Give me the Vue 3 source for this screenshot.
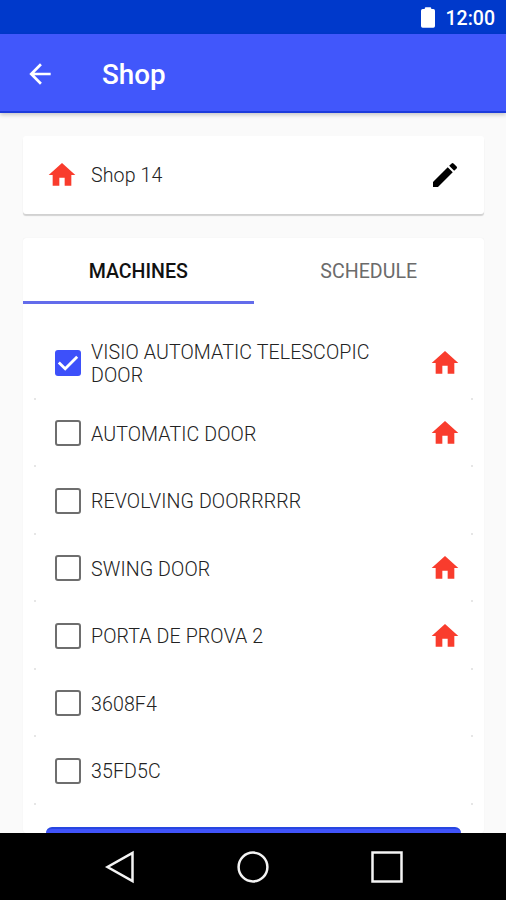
<template>
  <div class="screen">
    <div class="status-bar">
      <svg class="battery" viewBox="0 0 15 22"><path d="M4 2V1.2Q4 0 5.2 0h4.6Q11 0 11 1.2V2h2.2Q15 2 15 3.8v16.4q0 1.8-1.8 1.8H1.8Q0 22 0 20.2V3.8Q0 2 1.8 2z" /></svg>
      <span class="clock">12:00</span>
    </div>

    <header class="app-bar">
      <svg class="back" viewBox="0 0 24 24"><path d="M20 11H7.83l5.59-5.59L12 4l-8 8 8 8 1.41-1.41L7.83 13H20v-2z" /></svg>
      <h1 class="title">{{ title }}</h1>
    </header>

    <main class="content">
      <section class="shop-card">
        <svg class="home" viewBox="0 0 24 24"><path d="M10 20v-6h4v6h5v-8h3L12 3 2 12h3v8z" /></svg>
        <span class="shop-name">Shop 14</span>
        <svg class="edit" viewBox="0 0 24 24"><path d="M3 17.25V21h3.75L17.81 9.94l-3.75-3.75L3 17.25zM20.71 7.04a1 1 0 0 0 0-1.41l-2.34-2.34a1 1 0 0 0-1.41 0l-1.83 1.83 3.75 3.75 1.83-1.83z" /></svg>
      </section>

      <section class="panel">
        <nav class="tabs">
          <button
            v-for="tab in tabs"
            :key="tab"
            class="tab"
            :class="{ active: tab === activeTab }"
            @click="activeTab = tab"
          >{{ tab }}</button>
        </nav>

        <ul class="machines">
          <li v-for="m in machines" :key="m.name" class="machine" @click="m.checked = !m.checked">
            <span class="checkbox" :class="{ checked: m.checked }">
              <svg v-if="m.checked" viewBox="0 0 26 26"><path d="M3.8 12.6l6.4 6.2L22.2 6.8" /></svg>
            </span>
            <span class="name">{{ m.name }}</span>
            <svg v-if="m.home" class="home" viewBox="0 0 24 24"><path d="M10 20v-6h4v6h5v-8h3L12 3 2 12h3v8z" /></svg>
          </li>
        </ul>

        <button class="submit"></button>
      </section>
    </main>

    <footer class="nav-bar">
      <svg viewBox="0 0 34 34"><path d="M30.5 2.8v28.4L5.5 17z" /></svg>
      <svg viewBox="0 0 34 34"><circle cx="17" cy="17" r="14.4" /></svg>
      <svg viewBox="0 0 34 34"><path d="M2.5 2.5h29v29h-29z" /></svg>
    </footer>
  </div>
</template>

<script setup>
import { ref } from 'vue'

const title = 'Shop'
const tabs = ['MACHINES', 'SCHEDULE']
const activeTab = ref('MACHINES')

const machines = ref([
  { name: 'VISIO AUTOMATIC TELESCOPIC DOOR', checked: true, home: true },
  { name: 'AUTOMATIC DOOR', checked: false, home: true },
  { name: 'REVOLVING DOORRRRR', checked: false, home: false },
  { name: 'SWING DOOR', checked: false, home: true },
  { name: 'PORTA DE PROVA 2', checked: false, home: true },
  { name: '3608F4', checked: false, home: false },
  { name: '35FD5C', checked: false, home: false }
])
</script>

<style>
body { margin: 0; overflow: hidden; }
</style>

<style scoped>
.screen {
  width: 506px;
  height: 900px;
  display: flex;
  flex-direction: column;
  overflow: hidden;
  background: #fafafa;
  font-family: Roboto, "Liberation Sans", sans-serif;
}
button { border: 0; padding: 0; background: none; font-family: inherit; }
.status-bar {
  flex: none;
  height: 34px;
  box-sizing: border-box;
  padding: 0 11px 0 0;
  display: flex;
  align-items: center;
  justify-content: flex-end;
  gap: 11px;
  background: #0039cb;
  color: #fff;
}
.battery { width: 14px; height: 21px; fill: #fff; }
.clock { font-size: 19.5px; font-weight: 500; line-height: 32px; padding-top: 3px; }
.app-bar {
  flex: none;
  height: 79px;
  box-sizing: border-box;
  padding: 2px 0 0 24px;
  display: flex;
  align-items: center;
  gap: 46px;
  background: #4157fb;
  border-bottom: 2px solid #1d3bdc;
  box-shadow: 0 2px 4px rgba(0,0,0,0.2);
  color: #fff;
}
.back { width: 32px; height: 32px; fill: #fff; }
.title { margin: 0; font-size: 27.8px; font-weight: 500; line-height: 36px; padding-top: 2px; }
.content {
  flex: 1;
  min-height: 0;
  padding: 23px 22px 0 23px;
  display: flex;
  flex-direction: column;
  gap: 24px;
  overflow: hidden;
}
.shop-card {
  flex: none;
  height: 78px;
  box-sizing: border-box;
  padding: 0 24px 0 23px;
  display: flex;
  align-items: center;
  background: #fff;
  border-radius: 3px;
  box-shadow: 0 2px 1px rgba(0,0,0,0.16);
}
.home { flex: none; width: 32px; height: 32px; fill: #f93c2d; }
.edit { width: 32px; height: 32px; margin-right: -1px; }
.shop-name { flex: 1; margin: 1px 0 0 13px; font-size: 19.6px; font-weight: 300; color: #222; letter-spacing: 0.1px; }
.panel {
  flex: 1;
  min-height: 0;
  display: flex;
  flex-direction: column;
  background: #fff;
  border-radius: 3px;
  box-shadow: 0 0 1px rgba(0,0,0,0.1);
}
.tabs { flex: none; height: 66px; display: flex; }
.tab {
  flex: 1;
  border-bottom: 3px solid transparent;
  font-size: 19.6px;
  color: #6b6b6b;
  padding-top: 4px;
}
.tab.active { border-color: #636ceb; color: #111; font-weight: 500; }
.machines { margin: 0; padding: 23px 11px 0; list-style: none; }
.machine {
  height: 67.5px;
  box-sizing: border-box;
  padding: 0 12px 0 21px;
  display: flex;
  align-items: center;
  background:
    linear-gradient(#e6e6e6, #e6e6e6) left bottom / 2px 2px no-repeat,
    linear-gradient(#e6e6e6, #e6e6e6) right bottom / 2px 2px no-repeat;
}
.machine:first-child { height: 72.5px; }
.checkbox {
  flex: none;
  width: 26px;
  height: 26px;
  box-sizing: border-box;
  border: 2px solid #6e6e6e;
  border-radius: 3px;
}
.checkbox.checked { border: 0; background: #3d50fa; }
.checkbox svg { display: block; width: 26px; height: 26px; fill: none; stroke: #fff; stroke-width: 2.8; }
.name {
  flex: 1;
  margin: 2px 40px 0 10px;
  font-size: 19.6px;
  font-weight: 300;
  letter-spacing: 0.1px;
  line-height: 23px;
  color: #222;
}
.submit {
  flex: none;
  height: 48px;
  margin: 22px 23px 0;
  background: #4053fa;
  border-top: 2px solid #2746e0;
  border-radius: 6px;
}
.nav-bar {
  flex: none;
  height: 67px;
  display: flex;
  align-items: center;
  justify-content: center;
  gap: 100px;
  background: #000;
}
.nav-bar svg { width: 34px; height: 34px; fill: none; stroke: #f4f4f4; stroke-width: 2.5; }
</style>
